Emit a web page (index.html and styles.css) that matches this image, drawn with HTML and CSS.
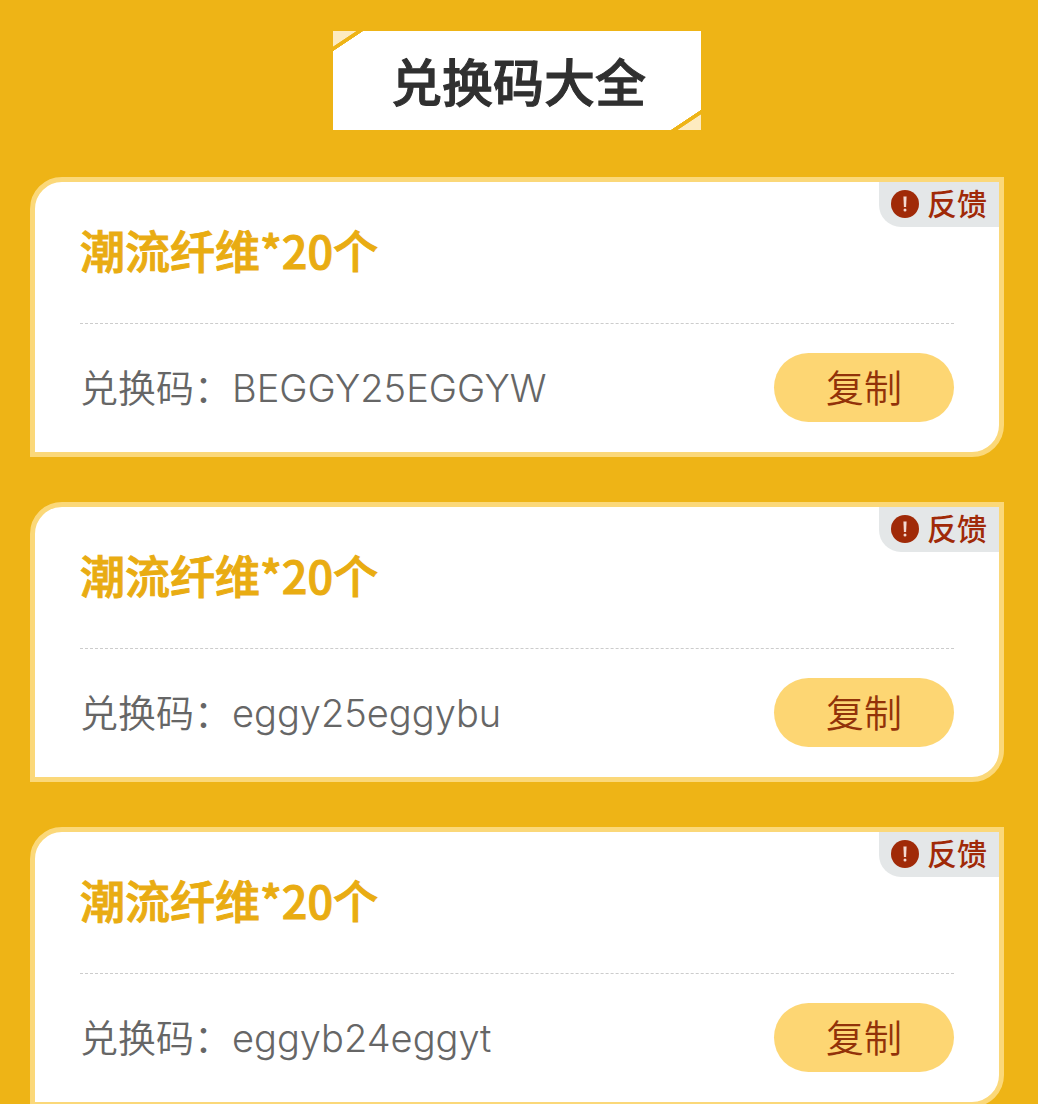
FILE: index.html
```html
<!DOCTYPE html>
<html lang="zh-CN">
<head>
    <meta charset="UTF-8">
    <meta name="viewport" content="width=device-width, initial-scale=1.0">
    <title>兑换码大全</title>
    <link rel="stylesheet" href="styles.css">
</head>
<body>

    <main class="page">
        <h1 class="page-title">兑换码大全</h1>

        <section class="card">
            <button class="feedback" type="button">
                <svg class="feedback-icon" viewBox="0 0 28 28" aria-hidden="true">
                    <circle cx="14" cy="14" r="14" fill="#a02a08"/>
                    <path d="M12.4 6.5h3.2l-.5 10.5h-2.2z" fill="#f3d9d2"/>
                    <circle cx="14" cy="20" r="1.5" fill="#f3d9d2"/>
                </svg>
                <span>反馈</span>
            </button>
            <h2 class="card-title">潮流纤维*20个</h2>
            <div class="card-row">
                <p class="code">兑换码：<span>BEGGY25EGGYW</span></p>
                <button class="copy" type="button">复制</button>
            </div>
        </section>

        <section class="card">
            <button class="feedback" type="button">
                <svg class="feedback-icon" viewBox="0 0 28 28" aria-hidden="true">
                    <circle cx="14" cy="14" r="14" fill="#a02a08"/>
                    <path d="M12.4 6.5h3.2l-.5 10.5h-2.2z" fill="#f3d9d2"/>
                    <circle cx="14" cy="20" r="1.5" fill="#f3d9d2"/>
                </svg>
                <span>反馈</span>
            </button>
            <h2 class="card-title">潮流纤维*20个</h2>
            <div class="card-row">
                <p class="code">兑换码：<span>eggy25eggybu</span></p>
                <button class="copy" type="button">复制</button>
            </div>
        </section>

        <section class="card">
            <button class="feedback" type="button">
                <svg class="feedback-icon" viewBox="0 0 28 28" aria-hidden="true">
                    <circle cx="14" cy="14" r="14" fill="#a02a08"/>
                    <path d="M12.4 6.5h3.2l-.5 10.5h-2.2z" fill="#f3d9d2"/>
                    <circle cx="14" cy="20" r="1.5" fill="#f3d9d2"/>
                </svg>
                <span>反馈</span>
            </button>
            <h2 class="card-title">潮流纤维*20个</h2>
            <div class="card-row">
                <p class="code">兑换码：<span>eggyb24eggyt</span></p>
                <button class="copy" type="button">复制</button>
            </div>
        </section>
    </main>

</body>
</html>
```

FILE: styles.css
```css
* {
    box-sizing: border-box;
}

body {
    margin: 0;
    height: 100vh;
    overflow: hidden;
    background: #eeb416;
    font-family: Inter, "Noto Sans CJK SC", sans-serif;
}

h1, h2, p {
    margin: 0;
}

button {
    border: none;
    font-family: inherit;
    cursor: pointer;
}

.page {
    display: flex;
    flex-direction: column;
    gap: 45px;
    padding: 31px 34px 45px 30px;
}

/* white plate with two cut corners */
.page-title {
    align-self: center;
    padding: 6px 55px 0 58px;
    margin-bottom: 2px;
    font-size: 51px;
    line-height: 93px;
    font-weight: 500;
    -webkit-text-stroke: 1px #303030;
    color: #303030;
    background:
        linear-gradient(to bottom right, #fdebc0 38%, #eeb416 40%, #eeb416 50%, transparent 51%) left top / 30px 20px no-repeat,
        linear-gradient(to top left, #fdebc0 38%, #eeb416 40%, #eeb416 50%, transparent 51%) right bottom / 30px 20px no-repeat,
        #fff;
}

.card {
    position: relative;
    padding: 0 45px;
    background: #fff;
    border: 5px solid #fbd879;
    border-radius: 32px 0 32px 0;
}

.card-title {
    padding-bottom: 6px;
    font-family: "Noto Sans CJK SC", sans-serif;
    font-size: 45px;
    line-height: 135px;
    font-weight: 500;
    -webkit-text-stroke: 1px #e9ac12;
    color: #e9ac12;
}

.card-row {
    display: flex;
    justify-content: space-between;
    align-items: center;
    height: 129px;
    padding-bottom: 2px;
    border-top: 1px dashed #ccc;
}

.code {
    padding-bottom: 4px;
    font-size: 38px;
    font-weight: 350;
    color: #666;
}

.copy {
    width: 180px;
    height: 69px;
    padding: 0 0 4px;
    border-radius: 35px;
    background: #fdd673;
    color: #923209;
    font-size: 38px;
    font-weight: 350;
}

.feedback {
    position: absolute;
    top: 0;
    right: 0;
    display: flex;
    align-items: center;
    gap: 8px;
    height: 45px;
    padding: 0 12px 2px;
    border-radius: 0 0 0 22px;
    background: #e4e7e8;
    color: #a02a08;
    font-size: 30px;
    font-weight: 500;
}

.feedback span {
    padding-bottom: 4px;
}

.feedback-icon {
    width: 28px;
    height: 28px;
}
```
